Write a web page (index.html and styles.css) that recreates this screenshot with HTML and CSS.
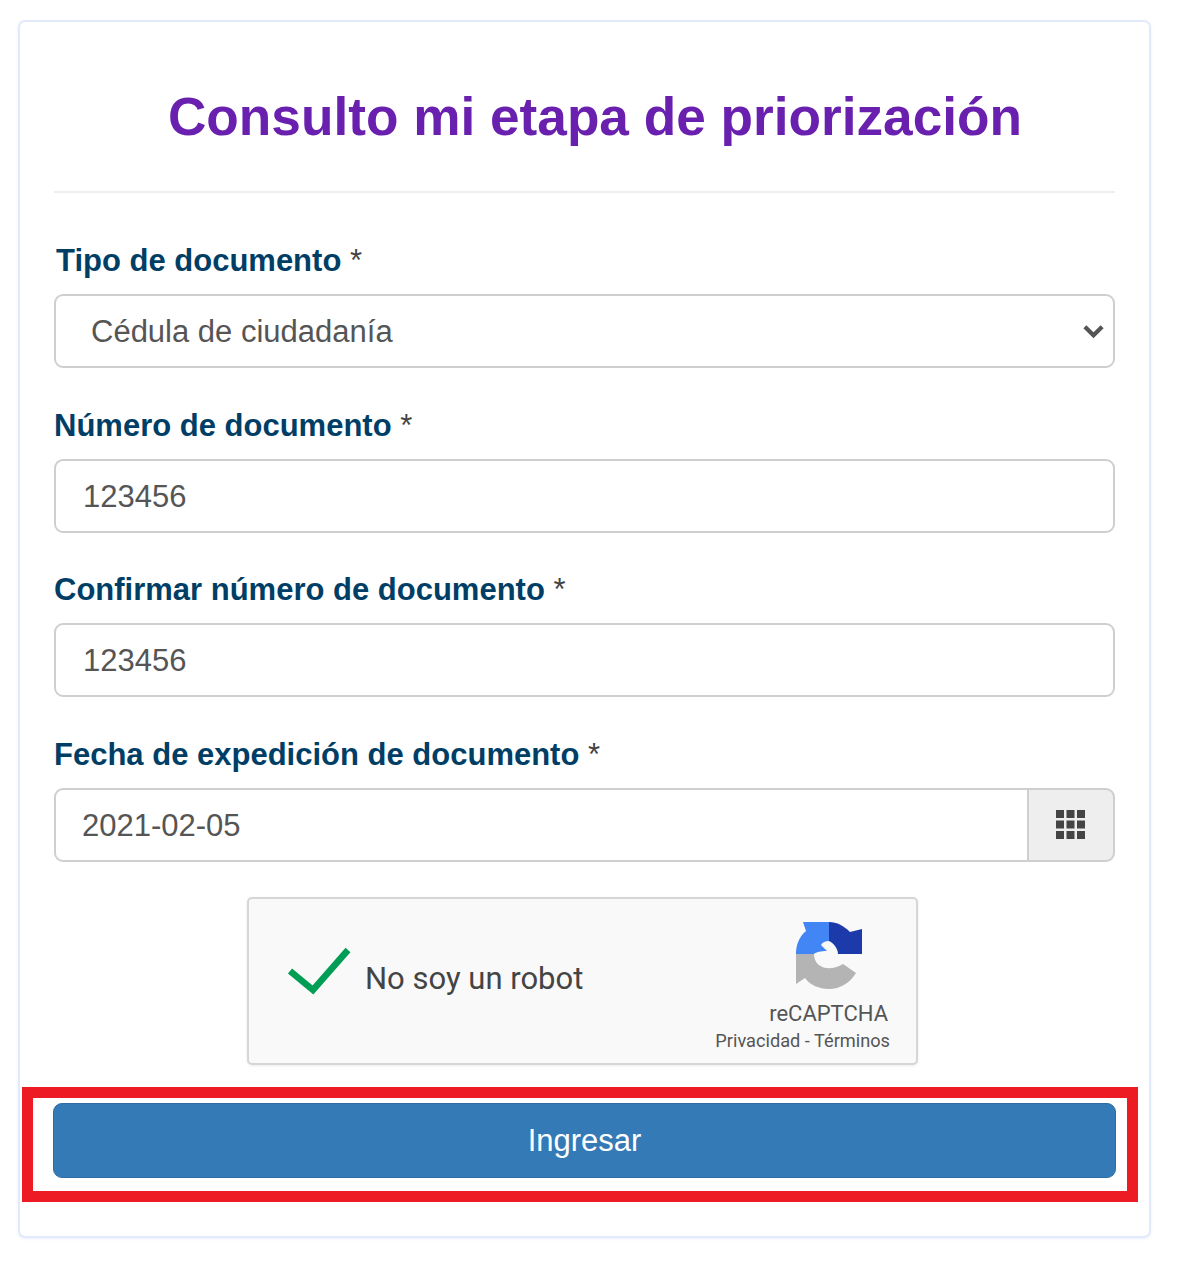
FILE: index.html
```html
<!DOCTYPE html>
<html lang="es">
<head>
<meta charset="utf-8">
<title>Consulto mi etapa de priorización</title>
<link rel="stylesheet" href="styles.css">
</head>
<body>
<main class="card">
  <h1 class="title">Consulto mi etapa de priorización</h1>
  <hr class="rule">
  <form class="form">
    <div class="field">
      <label class="label label-first" for="tipo">Tipo de documento <span class="req">*</span></label>
      <div class="select-wrap">
        <select class="control select" id="tipo"><option>Cédula de ciudadanía</option></select>
        <svg class="chevron" viewBox="0 0 24 16" aria-hidden="true"><path d="M3 3.500 12 12.500 21 3.500" fill="none" stroke="#555" stroke-width="4.400"/></svg>
      </div>
    </div>
    <div class="field">
      <label class="label" for="num">Número de documento <span class="req">*</span></label>
      <input class="control" id="num" value="123456">
    </div>
    <div class="field">
      <label class="label" for="conf">Confirmar número de documento <span class="req">*</span></label>
      <input class="control" id="conf" value="123456">
    </div>
    <div class="field">
      <label class="label" for="fecha">Fecha de expedición de documento <span class="req">*</span></label>
      <div class="date-group">
        <input class="control date-input" id="fecha" value="2021-02-05">
        <span class="addon">
          <svg class="grid-icon" viewBox="0 0 29 29" aria-hidden="true"><path fill="#444" d="M0 0h8v8H0zM10.500 0h8v8h-8zM21 0h8v8h-8zM0 10.500h8v8H0zM10.500 10.500h8v8h-8zM21 10.500h8v8h-8zM0 21h8v8H0zM10.500 21h8v8h-8zM21 21h8v8h-8z"/></svg>
        </span>
      </div>
    </div>
    <div class="captcha">
      <svg class="check" viewBox="0 0 64 48" aria-hidden="true"><path d="M3 24 26 43 61 3" fill="none" stroke="#009e55" stroke-width="6.500"/></svg>
      <span class="captcha-text">No soy un robot</span>
      <div class="captcha-brand">
        <svg class="logo" viewBox="0 0 68 68" aria-hidden="true">
          <path fill="#b4b4b4" d="M0 33H18C18 36 19 41 23 44 28 48 37 49 47 43L60 52C54 62 44 68 33 68 23 68 14 64 9 57L0 63Z"/>
          <path fill="#4285f4" d="M0 33C0 24 3 16 10 10L7 1H33V20C29 20 27 21 25 24L31 30C25 30 20 31 18 33Z"/>
          <path fill="#1c3aa9" d="M33 1C41 1 48 5 54 11L66 8V33H42C42 28 38 22 33 20Z"/>
        </svg>
        <span class="brand-name">reCAPTCHA</span>
        <span class="brand-links">Privacidad - Términos</span>
      </div>
    </div>
    <div class="submit-wrap">
      <button class="submit" type="button">Ingresar</button>
      <span class="highlight" aria-hidden="true"></span>
    </div>
  </form>
</main>
</body>
</html>
```

FILE: styles.css
```css
* { box-sizing: border-box; }
html, body { margin: 0; background: #fff; }
body { padding: 20px 49px 49px 18px; font-family: "Liberation Sans", Arial, sans-serif; }
.card {
  position: relative;
  height: 1218px;
  border: 2px solid #e1e9fb;
  border-radius: 7px;
  padding: 0 34px;
  box-shadow: 0 1px 3px rgba(225, 233, 251, .6);
}
.title {
  margin: 0;
  padding: 66px 0 0 21px;
  height: 121px;
  font-size: 53.200px;
  line-height: 57px;
  font-weight: 700;
  color: #6a20ae;
  text-align: center;
  white-space: nowrap;
}
.rule { margin: 48px 0 0; border: 0; border-top: 2px solid #eeeeee; }
.form { display: flex; flex-direction: column; padding-top: 49px; }
.field { display: flex; flex-direction: column; margin-bottom: 38.670px; }
.label {
  height: 36px;
  margin-bottom: 16px;
  font-size: 31px;
  line-height: 38px;
  font-weight: 700;
  color: #003e66;
}
.label-first { margin-left: 2px; }
.req { font-weight: 400; color: #444; }
.control {
  display: block;
  width: 100%;
  height: 74px;
  padding: 2px 27px 0;
  border: 2px solid #cfcfcf;
  border-radius: 9px;
  background: #fff;
  font-family: "Liberation Sans", Arial, sans-serif;
  font-size: 31px;
  color: #555;
  outline: none;
}
.select-wrap { position: relative; }
.select { appearance: none; padding-left: 35px; padding-top: 0; }
.chevron { position: absolute; right: 10px; top: 29px; width: 23px; height: 16px; }
.date-group { display: flex; }
.date-input { flex: 1; min-width: 0; border-radius: 9px 0 0 9px; padding-left: 26px; }
.addon {
  display: flex;
  align-items: center;
  justify-content: center;
  width: 88px;
  height: 74px;
  margin-left: -2px;
  padding-right: 2px;
  border: 2px solid #cfcfcf;
  border-radius: 0 9px 9px 0;
  background: #eeeeee;
}
.grid-icon { width: 29px; height: 29px; }
.captcha {
  display: flex;
  align-items: center;
  align-self: center;
  width: 671px;
  height: 168px;
  margin: -4px 0 0 -4px;
  padding: 0 26px 0 38px;
  border: 2px solid #d6d6d6;
  border-radius: 5px;
  background: #f9f9f9;
  box-shadow: 0 1px 3px rgba(0, 0, 0, .08);
  font-family: Roboto, sans-serif;
  color: #555;
}
.check { width: 64px; height: 48px; flex: none; margin-bottom: 20px; }
.captcha-text { margin: 0 0 5px 14px; font-size: 31px; color: #444; }
.captcha-brand { display: flex; flex-direction: column; align-items: flex-end; margin-left: auto; padding-top: 12px; }
.logo { width: 68px; height: 68px; margin-right: 26px; }
.brand-name { margin: 10px 2px 0 0; font-size: 22px; line-height: 30px; }
.brand-links { margin-top: 0; font-size: 18.200px; line-height: 24px; }
.submit-wrap { position: relative; margin-top: 38px; }
.submit {
  display: block;
  width: calc(100% + 2px);
  height: 75.500px;
  margin-left: -1px;
  padding-top: 3px;
  border: 1px solid #2e6da4;
  border-radius: 9px;
  background: #337ab7;
  color: #fff;
  font-family: "Liberation Sans", Arial, sans-serif;
  font-size: 31px;
}
.highlight {
  position: absolute;
  top: -16px;
  right: -23px;
  bottom: -24px;
  left: -32px;
  border: 11px solid #ed1c24;
  pointer-events: none;
}
```
